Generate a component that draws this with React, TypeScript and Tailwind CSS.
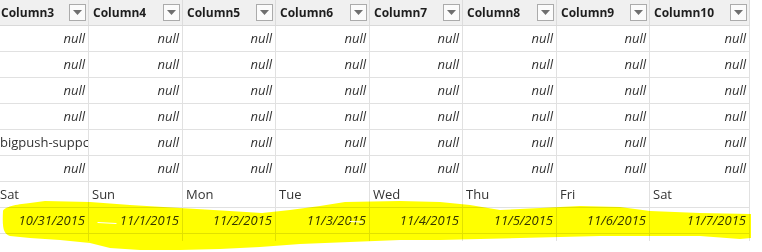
import React from "react";

const widths = [
  "w-[92px]",
  "w-[94px]",
  "w-[93px]",
  "w-[94px]",
  "w-[93px]",
  "w-[94px]",
  "w-[93px]",
  "w-[100px]",
];

const headers = [
  "Column3",
  "Column4",
  "Column5",
  "Column6",
  "Column7",
  "Column8",
  "Column9",
  "Column10",
];

type Cell = { t: string; kind: "null" | "text" | "date" };

const nullRow = (): Cell[] => headers.map(() => ({ t: "null", kind: "null" }));

const rows: Cell[][] = [
  nullRow(),
  nullRow(),
  nullRow(),
  nullRow(),
  [{ t: "bigpush-suppc", kind: "text" }, ...nullRow().slice(1)],
  nullRow(),
  ["Sat", "Sun", "Mon", "Tue", "Wed", "Thu", "Fri", "Sat"].map((t) => ({ t, kind: "text" as const })),
  [
    "10/31/2015",
    "11/1/2015",
    "11/2/2015",
    "11/3/2015",
    "11/4/2015",
    "11/5/2015",
    "11/6/2015",
    "11/7/2015",
  ].map((t) => ({ t, kind: "date" as const })),
];

function DropButton() {
  return (
    <div className="w-[17px] h-[17px] shrink-0 border border-[#ababab] bg-[#fbfbfb] flex items-center justify-center">
      <svg width="9" height="5" viewBox="0 0 9 5">
        <path d="M0 0 H9 L4.5 5 Z" fill="#6f6f6f" />
      </svg>
    </div>
  );
}

export default function App() {
  return (
    <div className="relative w-[762px] h-[252px] bg-white overflow-hidden font-['Open_Sans',sans-serif]">
      <div className="-ml-[3px] w-[753px]">
        <div className="flex h-[26px] bg-[#f0f0f0] border-b border-[#d9d9d9]">
          {headers.map((h, i) => (
            <div
              key={h}
              className={`${widths[i]} shrink-0 flex items-center justify-between pl-[4px] pr-[2px] border-r border-[#dcdcdc]`}
            >
              <span className="text-[12px] font-bold text-[#1e1e1e] leading-none">{h}</span>
              <DropButton />
            </div>
          ))}
        </div>
        {rows.map((r, ri) => (
          <div key={ri} className="flex h-[26px] border-b border-[#e1e1e1]">
            {r.map((c, ci) => (
              <div
                key={ci}
                className={`${widths[ci]} shrink-0 flex items-center overflow-hidden whitespace-nowrap border-r border-[#e1e1e1] text-[13px] text-[#333] ${
                  c.kind === "text" ? "justify-start pl-[3px]" : "justify-end pr-[3px] italic"
                }`}
              >
                {c.t}
              </div>
            ))}
          </div>
        ))}
        <div className="flex h-[7px]">
          {widths.map((w, i) => (
            <div key={i} className={`${w} shrink-0 border-r border-[#e1e1e1]`} />
          ))}
        </div>
      </div>
      <svg
        className="absolute left-0 top-0 pointer-events-none mix-blend-multiply"
        width="762"
        height="252"
        viewBox="0 0 762 252"
      >
        <path
          d="M3 211 C5 206 20 204 30 203 L45 201 L90 202 L130 205 L180 208 L230 211 L262 213 L290 210 L320 206 L345 202 L400 201 L440 202 L470 205 L500 210 L540 208 L580 206 L620 207 L650 211 L700 213 L751 214 L751 238 L740 239 L700 236 L650 236 L600 236 L560 237 L520 238 L480 239 L440 240 L400 240 L350 242 L300 244 L260 247 L220 249 L180 250 L140 250 L110 248 L90 243 L60 240 L30 238 L10 236 C4 234 2 230 3 211 Z"
          fill="#ffff00"
        />
      </svg>
      <svg
        className="absolute left-0 top-0 pointer-events-none"
        width="762"
        height="252"
        viewBox="0 0 762 252"
      >
        <path d="M98 222.5 L116 223.5" stroke="#ffffff" strokeWidth="1.2" strokeLinecap="round" />
        <path d="M350 221.5 L362 222" stroke="#ffffff" strokeWidth="1" strokeLinecap="round" />
      </svg>
    </div>
  );
}
